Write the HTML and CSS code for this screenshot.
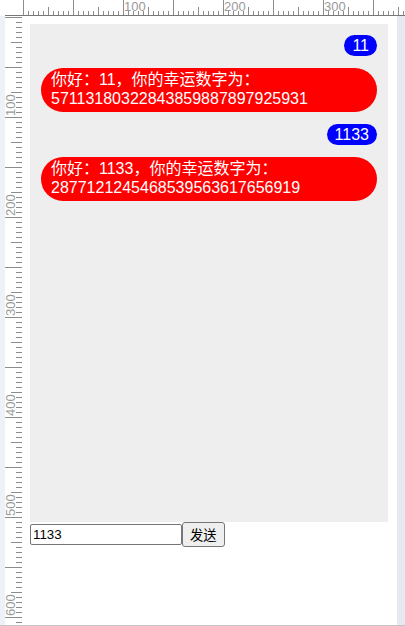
FILE: index.html
```html
<!DOCTYPE html>
<html lang="zh-CN">
<head>
<meta charset="utf-8">
<title>幸运数字</title>
<link rel="stylesheet" href="styles.css">
</head>
<body>
<div class="screen">
  <div class="ruler-top">
    <div class="ruler-top-gap"></div>
    <div class="ruler-top-track">
      <div class="hlabels"><span>100</span><span>200</span><span>300</span></div>
    </div>
  </div>
  <div class="main">
    <div class="ruler-left">
      <div class="left-strip"></div>
      <div class="ruler-left-track">
        <div class="vlabels"><span>100</span><span>200</span><span>300</span><span>400</span><span>500</span><span>600</span></div>
      </div>
    </div>
    <div class="viewport">
      <div class="chat">
        <div class="msg-me">11</div>
        <div class="msg-bot">你好：11，你的幸运数字为：57113180322843859887897925931</div>
        <div class="msg-me">1133</div>
        <div class="msg-bot">你好：1133，你的幸运数字为：2877121245468539563617656919</div>
      </div>
      <div class="compose">
        <input class="field" type="text" value="1133">
        <button class="send" type="button">发送</button>
      </div>
    </div>
    <div class="right-strip"></div>
  </div>
</div>
</body>
</html>
```
FILE: styles.css
```css
html, body {
  margin: 0;
  padding: 0;
}
body {
  width: 405px;
  height: 626px;
  overflow: hidden;
  background: #ffffff;
  font-family: "Liberation Sans", "Noto Sans CJK SC", sans-serif;
}
.screen {
  display: flex;
  flex-direction: column;
  height: 626px;
  box-sizing: border-box;
  border-bottom: 1px solid #c4c4c4;
}
.ruler-top {
  display: flex;
  flex: none;
  height: 16px;
}
.ruler-top-gap {
  width: 5px;
  flex: none;
}
.ruler-top-track {
  flex: 1;
  height: 15px;
  border-bottom: 1px solid #777777;
  background:
    repeating-linear-gradient(to right, #8c8c8c 0 1px, transparent 1px 50px) 18px 0 / calc(100% - 18px) 15px no-repeat,
    repeating-linear-gradient(to right, #8c8c8c 0 1px, transparent 1px 25px) 18px 100% / calc(100% - 18px) 8px no-repeat,
    repeating-linear-gradient(to right, #8c8c8c 0 1px, transparent 1px 5px) 18px 100% / calc(100% - 18px) 4px no-repeat;
}
.hlabels {
  display: flex;
  padding-left: 119px;
  font-size: 13px;
  line-height: 14px;
  color: #9a9a9a;
}
.hlabels span {
  flex: none;
  width: 100px;
}
.main {
  display: flex;
  flex: 1;
  min-height: 0;
}
.ruler-left {
  display: flex;
  flex: none;
  width: 22px;
}
.left-strip {
  width: 5px;
  flex: none;
  background: #eff1f8;
}
.ruler-left-track {
  flex: 1;
  background:
    repeating-linear-gradient(to bottom, #8c8c8c 0 1px, transparent 1px 50px) 100% 1px / 17px calc(100% - 1px) no-repeat,
    repeating-linear-gradient(to bottom, #8c8c8c 0 1px, transparent 1px 25px) 100% 1px / 11px calc(100% - 1px) no-repeat,
    repeating-linear-gradient(to bottom, #8c8c8c 0 1px, transparent 1px 5px) 100% 1px / 6px calc(100% - 1px) no-repeat;
}
.vlabels {
  display: flex;
  flex-direction: column;
  width: 11px;
  font-size: 13px;
  line-height: 11px;
  color: #9a9a9a;
}
.vlabels span {
  height: 100px;
  flex: none;
  writing-mode: vertical-rl;
  transform: rotate(180deg);
}
.viewport {
  width: 375px;
  flex: none;
  padding: 8px;
  box-sizing: border-box;
}
.chat {
  width: 358px;
  height: 498px;
  box-sizing: border-box;
  background: #eeeeee;
  padding: 11px 11px 0;
  display: flex;
  flex-direction: column;
  gap: 12px;
}
.msg-me {
  align-self: flex-end;
  background: #0000ff;
  color: #ffffff;
  font-size: 16px;
  line-height: 21px;
  padding: 0 8px;
  border-radius: 11px;
}
.msg-bot {
  background: #ff0000;
  color: #ffffff;
  font-size: 16px;
  line-height: 19px;
  padding: 2px 10px 4px;
  border-radius: 22px;
}
.compose {
  display: flex;
  align-items: center;
}
.field {
  width: 152px;
  height: 21px;
  box-sizing: border-box;
  margin: 0;
  border: 1px solid #767676;
  border-radius: 2px;
  padding: 1px 2px;
  font-family: "Liberation Sans", "Noto Sans CJK SC", sans-serif;
  font-size: 13.33px;
  color: #000000;
  background: #ffffff;
}
.send {
  height: 25px;
  box-sizing: border-box;
  margin: 0;
  border: 1px solid #767676;
  border-radius: 3px;
  padding: 0 7px;
  background: #efefef;
  font-family: "Noto Sans CJK SC", sans-serif;
  font-size: 13.33px;
  line-height: 1;
  color: #000000;
}
.right-strip {
  width: 8px;
  flex: none;
  background: #e6e9f2;
}
```
